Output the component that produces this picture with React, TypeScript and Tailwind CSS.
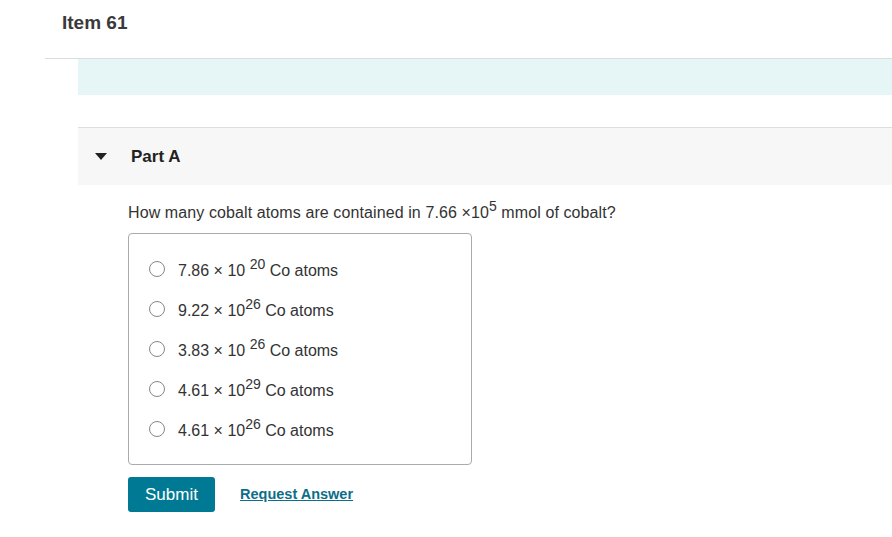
import React from 'react';

const options: { base: string; sp: string; exp: string }[] = [
  { base: '7.86 × 10', sp: ' ', exp: '20' },
  { base: '9.22 × 10', sp: '', exp: '26' },
  { base: '3.83 × 10', sp: ' ', exp: '26' },
  { base: '4.61 × 10', sp: '', exp: '29' },
  { base: '4.61 × 10', sp: '', exp: '26' },
];

export default function App() {
  return (
    <div className="min-h-[537px] w-full bg-white text-[#333] font-['Liberation_Sans',Arial,sans-serif]">
      <div className="h-[58px] pl-[62px] pt-[11px]">
        <h1 className="text-[19px] leading-[23px] font-bold text-[#3a3a3a]">Item 61</h1>
      </div>
      <div className="ml-[45px] border-t border-[#dcdcdc]" />
      <div className="ml-[78px]">
        <div className="h-[36px] bg-[#e6f5f6]" />
        <div className="h-[32px]" />
        <div className="border-t border-[#dedede] h-[58px] bg-[#f7f7f7] flex items-center">
          <svg width="12" height="7" viewBox="0 0 12 7" className="ml-[17px]">
            <path d="M0 0 L12 0 L6 7 Z" fill="#222" />
          </svg>
          <span className="ml-[24px] text-[17px] font-bold text-[#222]">Part A</span>
        </div>
        <div className="pl-[50px] pt-[18px]">
          <p className="text-[16px] leading-[20px] tracking-[0.1px]">
            How many cobalt atoms are contained in 7.66 ×10<sup className="text-[14px]">5</sup> mmol of cobalt?
          </p>
          <div className="mt-[10px] w-[344px] h-[232px] border border-[#ababab] rounded-[4px] pt-[15px]">
            {options.map((o, i) => (
              <label key={i} className="h-[40px] flex items-center pl-[20px] cursor-pointer">
                <span className="w-[16px] h-[16px] rounded-full border border-[#858585] bg-white" />
                <span className="ml-[13px] pt-[4px] text-[16px] leading-[20px] text-[#333]">
                  {o.base}
                  {o.sp}
                  <sup className="text-[14px]">{o.exp}</sup> Co atoms
                </span>
              </label>
            ))}
          </div>
          <div className="mt-[12px] flex items-center">
            <button className="w-[87px] h-[35px] rounded-[3px] bg-[#007a94] text-white text-[17px]">Submit</button>
            <a href="#" className="ml-[25px] text-[14.5px] font-bold text-[#0c6e88] underline">
              Request Answer
            </a>
          </div>
        </div>
      </div>
    </div>
  );
}
